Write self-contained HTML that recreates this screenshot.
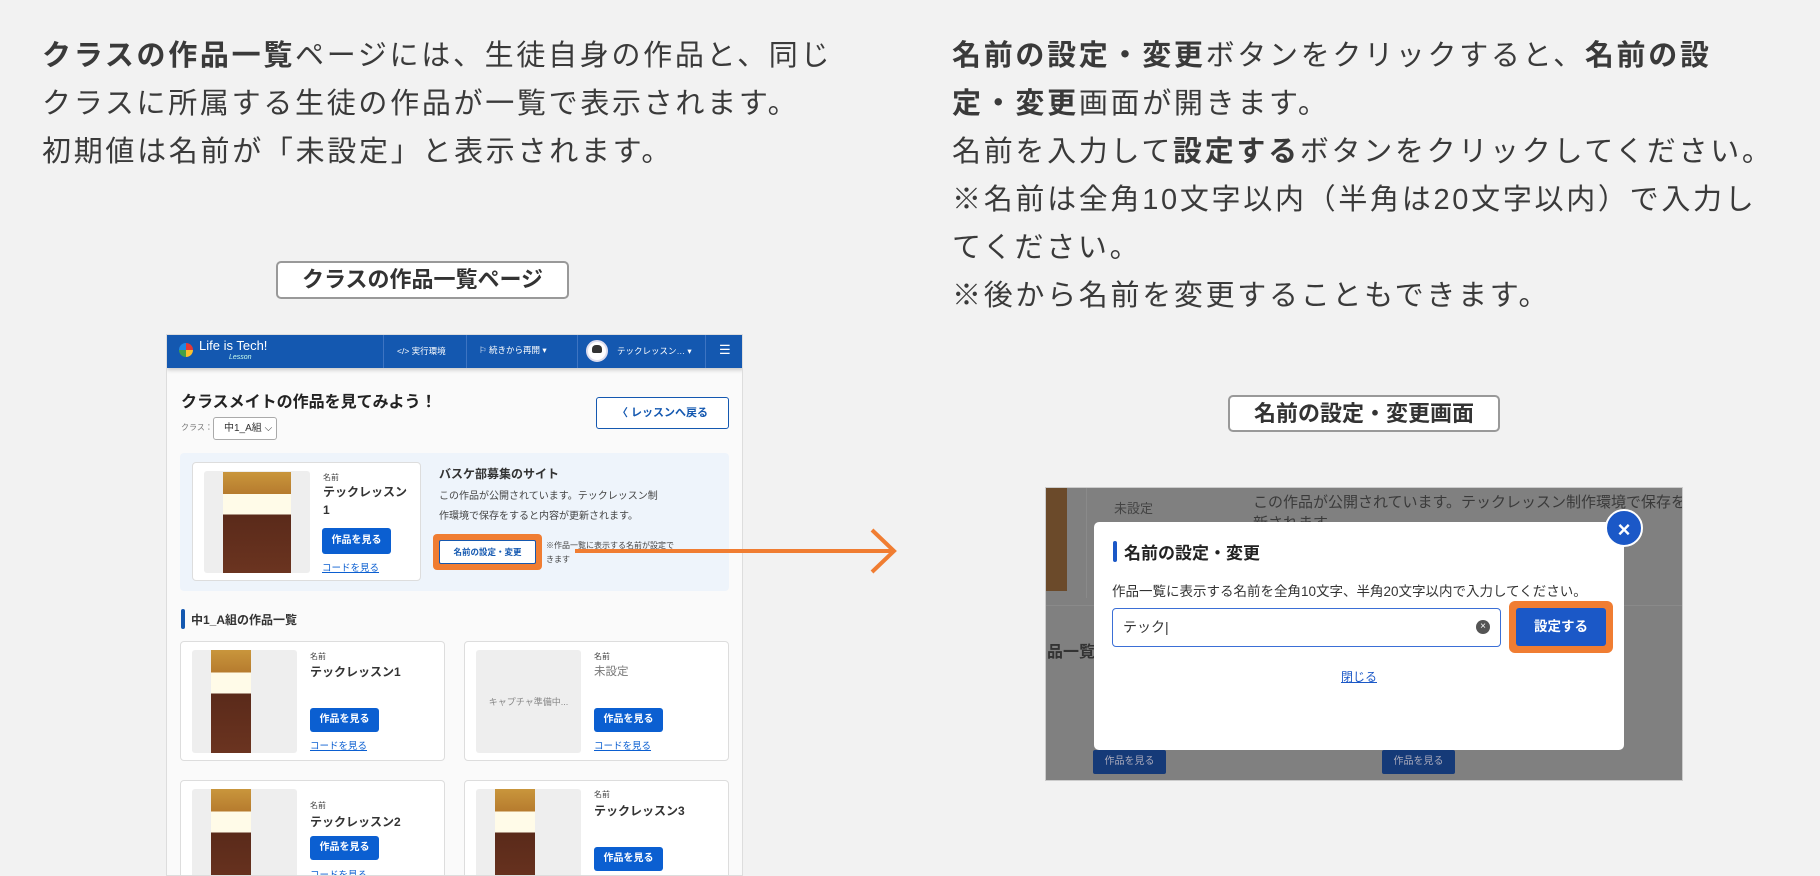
<!DOCTYPE html>
<html><head><meta charset="utf-8"><style>
*{margin:0;padding:0;box-sizing:border-box}
body{width:1820px;height:876px;background:#f2f2f2;position:relative;overflow:hidden;font-family:"Liberation Sans","Noto Sans CJK JP",sans-serif;color:#333}
.a{position:absolute;white-space:nowrap}
.big{font-size:29px;letter-spacing:2.7px;line-height:48px;color:#3a3a3a}
.lab{position:absolute;border:2px solid #999;border-radius:5px;background:#fff;font-weight:bold;font-size:22px;text-align:center;color:#333}
.btn{position:absolute;background:#0b5fd1;color:#fff;font-size:10px;font-weight:bold;border-radius:3px;text-align:center}
.lnk{position:absolute;color:#0b5fd1;text-decoration:underline;font-size:9.5px}
.s{font-size:8px;color:#444}
.card{position:absolute;background:#fff;border:1px solid #ddd;border-radius:4px}
.th{position:absolute;background:#eee;border-radius:3px}
.img{position:absolute;background:linear-gradient(#c9963c 0,#b67b2e 22%,#fffbe8 22%,#fffbe8 42%,#5a2a1a 42%,#6b3420 100%)}
</style></head><body>

<div class="a big" style="left:42px;top:32px"><b>クラスの作品一覧</b>ページには、生徒自身の作品と、同じ<br>クラスに所属する生徒の作品が一覧で表示されます。<br>初期値は名前が「未設定」と表示されます。</div>

<div class="a big" style="left:952px;top:32px"><b>名前の設定・変更</b>ボタンをクリックすると、<b>名前の設</b><br><b>定・変更</b>画面が開きます。<br>名前を入力して<b>設定する</b>ボタンをクリックしてください。<br>※名前は全角10文字以内（半角は20文字以内）で入力し<br>てください。<br>※後から名前を変更することもできます。</div>

<div class="lab" style="left:276px;top:261px;width:293px;height:38px;line-height:34px">クラスの作品一覧ページ</div>
<div class="lab" style="left:1228px;top:395px;width:272px;height:37px;line-height:33px">名前の設定・変更画面</div>

<!-- left screenshot -->
<div style="position:absolute;left:166px;top:334px;width:577px;height:542px;background:#fafafa;border:1px solid #ddd;overflow:hidden">
 <div style="position:absolute;left:0;top:0;width:577px;height:33px;background:#1458b0;box-shadow:0 2px 4px rgba(0,0,0,.2)">
  <div class="a" style="left:12px;top:8px;width:14px;height:14px;border-radius:50%;background:conic-gradient(#e53935 0 25%,#fbc02d 0 50%,#43a047 0 75%,#1e88e5 0)"></div>
  <div class="a" style="left:32px;top:3px;color:#fff;font-size:13px">Life is Tech!</div>
  <div class="a" style="left:62px;top:19px;color:#cfe;font-size:7px;font-style:italic">Lesson</div>
  <div class="a" style="left:216px;top:0;width:1px;height:33px;background:#3d74c2"></div>
  <div class="a" style="left:299px;top:0;width:1px;height:33px;background:#3d74c2"></div>
  <div class="a" style="left:410px;top:0;width:1px;height:33px;background:#3d74c2"></div>
  <div class="a" style="left:538px;top:0;width:1px;height:33px;background:#3d74c2"></div>
  <div class="a" style="left:230px;top:10px;color:#fff;font-size:8.5px">&lt;/&gt; 実行環境</div>
  <div class="a" style="left:312px;top:9px;color:#fff;font-size:8.5px">⚐ 続きから再開 ▾</div>
  <div class="a" style="left:419px;top:5px;width:22px;height:22px;border-radius:50%;background:#fff;border:2px solid #dde"></div>
  <div class="a" style="left:425px;top:10px;width:10px;height:8px;border-radius:4px 4px 2px 2px;background:#333"></div>
  <div class="a" style="left:450px;top:10px;color:#fff;font-size:8.5px">テックレッスン… ▾</div>
  <div class="a" style="left:552px;top:7px;color:#fff;font-size:13px">☰</div>
 </div>
 <div class="a" style="left:14px;top:53px;font-size:16px;font-weight:bold;color:#222">クラスメイトの作品を見てみよう！</div>
 <div class="a s" style="left:14px;top:87px;color:#777">クラス：</div>
 <div class="a" style="left:46px;top:82px;width:64px;height:23px;border:1px solid #aaa;border-radius:3px;background:#fff;font-size:10px;line-height:21px;padding-left:10px">中1_A組 ⌵</div>
 <div class="a" style="left:429px;top:62px;width:133px;height:32px;border:1px solid #1458b0;border-radius:3px;background:#fff;color:#1458b0;font-size:11px;font-weight:bold;text-align:center;line-height:30px">〈 レッスンへ戻る</div>
 <div class="a" style="left:13px;top:118px;width:549px;height:138px;background:#eef4fb;border-radius:4px"></div>
 <div class="card" style="left:25px;top:127px;width:229px;height:119px"></div>
 <div class="th" style="left:37px;top:136px;width:106px;height:102px"></div>
 <div class="img" style="left:56px;top:137px;width:68px;height:101px"></div>
 <div class="a s" style="left:156px;top:137px">名前</div>
 <div class="a" style="left:156px;top:148px;font-size:12px;font-weight:bold;line-height:18px">テックレッスン<br>1</div>
 <div class="btn" style="left:155px;top:193px;width:69px;height:26px;line-height:26px">作品を見る</div>
 <div class="lnk" style="left:155px;top:225px">コードを見る</div>
 <div class="a" style="left:272px;top:130px;font-size:12px;font-weight:bold">バスケ部募集のサイト</div>
 <div class="a" style="left:272px;top:152px;font-size:10px;line-height:20px;color:#444">この作品が公開されています。テックレッスン制<br>作環境で保存をすると内容が更新されます。</div>
 <div class="a" style="left:266px;top:199px;width:109px;height:36px;background:#f07d32;border-radius:4px"></div>
 <div class="a" style="left:272px;top:205px;width:97px;height:24px;background:#fff;border:1px solid #1458b0;border-radius:2px;color:#1458b0;font-size:8.5px;font-weight:bold;text-align:center;line-height:22px">名前の設定・変更</div>
 <div class="a" style="left:379px;top:204px;font-size:8px;line-height:14px;color:#444">※作品一覧に表示する名前が設定で<br>きます</div>

 <div class="a" style="left:14px;top:274px;width:4px;height:20px;background:#1458b0;border-radius:2px"></div>
 <div class="a" style="left:24px;top:276px;font-size:12px;font-weight:bold">中1_A組の作品一覧</div>

 <div class="card" style="left:13px;top:306px;width:265px;height:120px"></div>
 <div class="th" style="left:25px;top:315px;width:105px;height:103px"></div>
 <div class="img" style="left:44px;top:315px;width:40px;height:103px"></div>
 <div class="a s" style="left:143px;top:316px">名前</div>
 <div class="a" style="left:143px;top:328px;font-size:12px;font-weight:bold">テックレッスン1</div>
 <div class="btn" style="left:143px;top:373px;width:69px;height:24px;line-height:24px">作品を見る</div>
 <div class="lnk" style="left:143px;top:403px">コードを見る</div>

 <div class="card" style="left:297px;top:306px;width:265px;height:120px"></div>
 <div class="th" style="left:309px;top:315px;width:105px;height:103px"></div>
 <div class="a" style="left:309px;top:360px;width:105px;text-align:center;font-size:9px;color:#888">キャプチャ準備中...</div>
 <div class="a s" style="left:427px;top:316px">名前</div>
 <div class="a" style="left:427px;top:328px;font-size:11.5px;color:#777">未設定</div>
 <div class="btn" style="left:427px;top:373px;width:69px;height:24px;line-height:24px">作品を見る</div>
 <div class="lnk" style="left:427px;top:403px">コードを見る</div>

 <div class="card" style="left:13px;top:445px;width:265px;height:120px"></div>
 <div class="th" style="left:25px;top:454px;width:105px;height:103px"></div>
 <div class="img" style="left:44px;top:454px;width:40px;height:103px"></div>
 <div class="a s" style="left:143px;top:465px">名前</div>
 <div class="a" style="left:143px;top:478px;font-size:12px;font-weight:bold">テックレッスン2</div>
 <div class="btn" style="left:143px;top:501px;width:69px;height:24px;line-height:24px">作品を見る</div>
 <div class="lnk" style="left:143px;top:532px">コードを見る</div>

 <div class="card" style="left:297px;top:445px;width:265px;height:120px"></div>
 <div class="th" style="left:309px;top:454px;width:105px;height:103px"></div>
 <div class="img" style="left:328px;top:454px;width:40px;height:103px"></div>
 <div class="a s" style="left:427px;top:454px">名前</div>
 <div class="a" style="left:427px;top:467px;font-size:12px;font-weight:bold">テックレッスン3</div>
 <div class="btn" style="left:427px;top:512px;width:69px;height:24px;line-height:24px">作品を見る</div>
</div>

<!-- arrow -->
<svg class="a" style="left:560px;top:520px" width="350" height="64">
 <line x1="15" y1="31" x2="332" y2="31" stroke="#f07d32" stroke-width="4"/>
 <polyline points="312,10 334,31 312,52" fill="none" stroke="#f07d32" stroke-width="4"/>
</svg>

<!-- right screenshot -->
<div style="position:absolute;left:1045px;top:487px;width:638px;height:294px;background:#808080;border:1px solid #ccc;overflow:hidden">
 <div class="a" style="left:0;top:0;width:21px;height:103px;background:#6b4a2a"></div>
 <div class="a" style="left:40px;top:0;width:1px;height:110px;background:#8a8a8a"></div>
 <div class="a" style="left:68px;top:10px;font-size:13px;color:#444">未設定</div>
 <div class="a" style="left:207px;top:3px;font-size:15px;color:#3a3a3a">この作品が公開されています。テックレッスン制作環境で保存をする<br>新されます</div>
 <div class="a" style="left:1px;top:150px;font-size:16px;font-weight:bold;color:#333">品一覧</div>
 <div class="a" style="left:0;top:117px;width:638px;height:1px;background:#8a8a8a"></div>
 <div class="a" style="left:47px;top:262px;width:73px;height:24px;background:#153a78;border-radius:2px;color:#aab;font-size:10px;text-align:center;line-height:24px">作品を見る</div>
 <div class="a" style="left:336px;top:262px;width:73px;height:24px;background:#153a78;border-radius:2px;color:#aab;font-size:10px;text-align:center;line-height:24px">作品を見る</div>
 <div class="a" style="left:48px;top:34px;width:530px;height:228px;background:#fff;border-radius:5px"></div>
 <div class="a" style="left:559px;top:21px;width:38px;height:38px;border-radius:50%;background:#1b58c7;color:#fff;font-size:22px;font-weight:bold;text-align:center;line-height:37px;border:2px solid #fff">×</div>
 <div class="a" style="left:67px;top:53px;width:4px;height:21px;background:#1b58c7;border-radius:2px"></div>
 <div class="a" style="left:78px;top:51px;font-size:17px;font-weight:bold;color:#222">名前の設定・変更</div>
 <div class="a" style="left:66px;top:92px;font-size:13.5px;color:#333">作品一覧に表示する名前を全角10文字、半角20文字以内で入力してください。</div>
 <div class="a" style="left:66px;top:120px;width:389px;height:39px;border:1px solid #3b6fd6;border-radius:4px;background:#fff;font-size:14px;line-height:37px;padding-left:10px">テック|</div>
 <div class="a" style="left:430px;top:132px;width:14px;height:14px;border-radius:50%;background:#555;color:#fff;font-size:10px;text-align:center;line-height:14px">×</div>
 <div class="a" style="left:463px;top:113px;width:104px;height:52px;background:#f07d32;border-radius:6px"></div>
 <div class="a" style="left:470px;top:120px;width:90px;height:38px;background:#1b58c7;border-radius:3px;color:#fff;font-size:13.5px;font-weight:bold;text-align:center;line-height:38px">設定する</div>
 <div class="a" style="left:0;top:180px;width:626px;text-align:center;font-size:12px;color:#1b58c7;text-decoration:underline">閉じる</div>
</div>
</body></html>
